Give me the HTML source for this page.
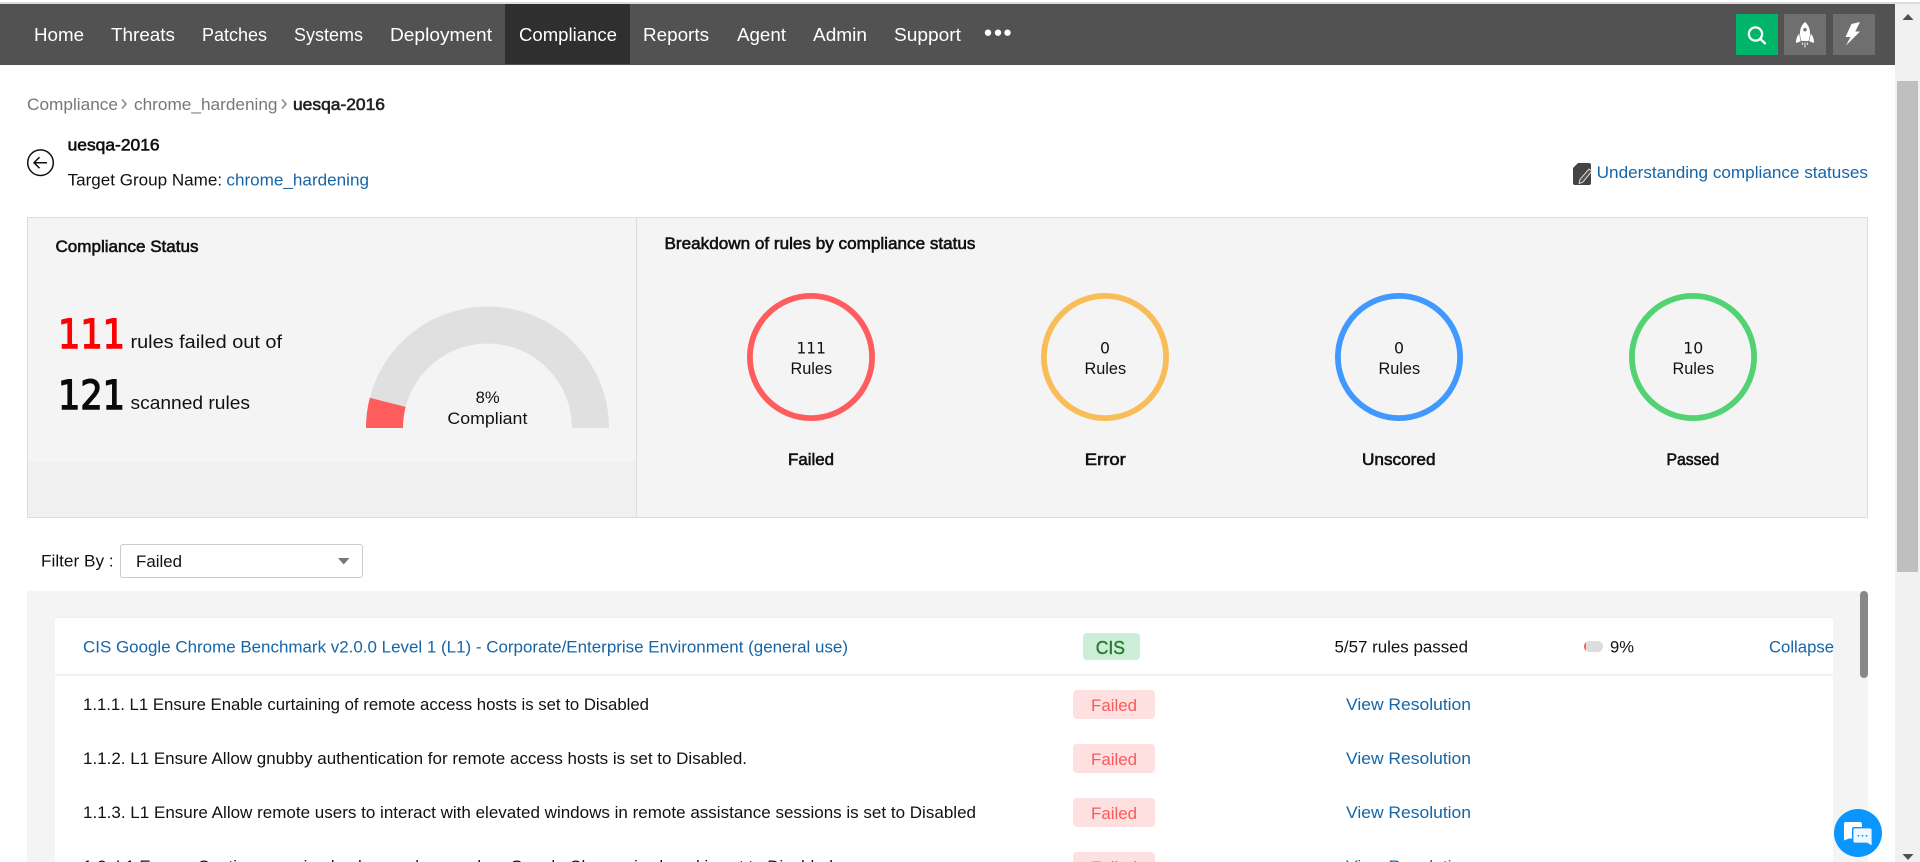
<!DOCTYPE html>
<html lang="en">
<head>
<meta charset="utf-8">
<title>uesqa-2016 - Compliance</title>
<style>
html,body{margin:0;padding:0;width:1920px;height:862px;overflow:hidden;background:#fff}
#page{position:relative;width:1920px;height:862px;overflow:hidden;background:#fff}
.b{position:absolute;box-sizing:border-box}
svg.o{position:absolute;left:0;top:0;width:1920px;height:862px}
text{font-family:"Liberation Sans",Arial,sans-serif;font-size:17px;fill:#111}
.nav{font-size:18px;fill:#fff}
.lnk{fill:#1565a8}
.crumb{fill:#777}
.bd{stroke:#111;stroke-width:.6}
.big{font-family:"DejaVu Sans",sans-serif;font-size:40px;stroke-width:1.4}
.num{font-family:"DejaVu Sans",sans-serif;font-size:16px}
.lg{font-size:18px}
.fl{fill:#f95a5a}
</style>
</head>
<body>
<div id="page">
<div class="b" style="left:0;top:2px;width:1920px;height:2px;background:#ddd"></div>
<div class="b" style="left:0;top:4px;width:1895px;height:61px;background:#525252"></div>
<div class="b" style="left:505px;top:4px;width:125px;height:60px;background:#2f2f2f"></div>
<div class="b" style="left:1736px;top:14px;width:42px;height:41px;background:#00b56a"></div>
<div class="b" style="left:1784px;top:14px;width:42px;height:41px;background:#6f6f6f"></div>
<div class="b" style="left:1833px;top:14px;width:42px;height:41px;background:#6f6f6f"></div>

<div class="b" style="left:1895px;top:4px;width:25px;height:858px;background:#f1f1f1"></div>
<div class="b" style="left:1897px;top:81px;width:21px;height:491px;background:#bfbfbf"></div>

<div class="b" style="left:27px;top:217px;width:1841px;height:301px;background:#f4f4f4;border:1px solid #ddd"></div>
<div class="b" style="left:28px;top:462px;width:608px;height:55px;background:#f0f0f0"></div>
<div class="b" style="left:636px;top:218px;width:1px;height:299px;background:#ddd"></div>

<div class="b" style="left:120px;top:544px;width:243px;height:34px;background:#fff;border:1px solid #ccc;border-radius:3px"></div>

<div class="b" style="left:27px;top:591px;width:1841px;height:271px;background:#f4f4f4"></div>
<div class="b" style="left:55px;top:618px;width:1778px;height:244px;background:#fff;box-shadow:0 -1px 0 #eee"></div>
<div class="b" style="left:55px;top:674px;width:1778px;height:2px;background:#f2f2f2"></div>
<div class="b" style="left:1860px;top:591px;width:8px;height:87px;background:#888;border-radius:4px"></div>

<div class="b" style="left:1083px;top:633px;width:57px;height:27px;background:#cdeed6;border-radius:4px"></div>
<div class="b" style="left:1584px;top:641px;width:19px;height:11px;background:#ddd;border-radius:6px;overflow:hidden"><div style="width:2px;height:11px;background:#ff5d5d"></div></div>

<div class="b" style="left:1073px;top:690px;width:82px;height:29px;background:#ffe0e0;border-radius:4px"></div>
<div class="b" style="left:1073px;top:744px;width:82px;height:29px;background:#ffe0e0;border-radius:4px"></div>
<div class="b" style="left:1073px;top:798px;width:82px;height:29px;background:#ffe0e0;border-radius:4px"></div>
<div class="b" style="left:1073px;top:852px;width:82px;height:10px;background:#ffe0e0;border-radius:4px 4px 0 0"></div>

<svg class="o" viewBox="0 0 1920 862" xmlns="http://www.w3.org/2000/svg">
<!-- nav -->
<text class="nav" x="34" y="41" textLength="50" lengthAdjust="spacingAndGlyphs">Home</text>
<text class="nav" x="111" y="41" textLength="64" lengthAdjust="spacingAndGlyphs">Threats</text>
<text class="nav" x="202" y="41" textLength="65" lengthAdjust="spacingAndGlyphs">Patches</text>
<text class="nav" x="294" y="41" textLength="69" lengthAdjust="spacingAndGlyphs">Systems</text>
<text class="nav" x="390" y="41" textLength="102" lengthAdjust="spacingAndGlyphs">Deployment</text>
<text class="nav" x="519" y="41" textLength="98" lengthAdjust="spacingAndGlyphs">Compliance</text>
<text class="nav" x="643" y="41" textLength="66" lengthAdjust="spacingAndGlyphs">Reports</text>
<text class="nav" x="737" y="41" textLength="49" lengthAdjust="spacingAndGlyphs">Agent</text>
<text class="nav" x="813" y="41" textLength="54" lengthAdjust="spacingAndGlyphs">Admin</text>
<text class="nav" x="894" y="41" textLength="67" lengthAdjust="spacingAndGlyphs">Support</text>
<circle cx="988" cy="32.7" r="3.2" fill="#fff"/><circle cx="998" cy="32.7" r="3.2" fill="#fff"/><circle cx="1007.5" cy="32.7" r="3.2" fill="#fff"/>

<!-- search -->
<circle cx="1755.5" cy="34" r="6.6" fill="none" stroke="#fff" stroke-width="2.3"/>
<path d="M1760.2 38.8L1765.7 44" stroke="#fff" stroke-width="2.4" fill="none"/>
<!-- rocket -->
<path fill="#fff" fill-rule="evenodd" d="M1805 22C1801.5 25 1800 29 1800 33C1800 36 1800.5 39 1801.5 41H1808.5C1809.5 39 1810 36 1810 33C1810 29 1808.5 25 1805 22ZM1805 28A1.7 1.7 0 1 1 1805 31.4A1.7 1.7 0 1 1 1805 28Z"/>
<path fill="#fff" d="M1799.3 33.5C1797 36 1796 39 1796 43L1800.8 41.2C1800 38.8 1799.5 36 1799.3 33.5ZM1810.7 33.5C1813 36 1814 39 1814 43L1809.2 41.2C1810 38.8 1810.5 36 1810.7 33.5Z"/>
<path stroke="#ddd" stroke-width="1.2" d="M1802.5 42.5V45M1805 42.5V47.5M1807.5 42.5V45"/>
<!-- bolt -->
<path fill="#fff" d="M1851.5 24L1860 22L1855.3 31.5H1860L1846 45.5L1850.5 37H1845.5Z"/>
<!-- scroll arrows -->
<path fill="#505050" d="M1908 14L1913.5 20H1902.5Z"/>
<path fill="#505050" d="M1908 860L1902.5 854H1913.5Z"/>

<!-- breadcrumb -->
<text class="crumb" x="27" y="110" textLength="91" lengthAdjust="spacingAndGlyphs">Compliance</text>
<path d="M122 99.5L126 104L122 108.5" fill="none" stroke="#888" stroke-width="1.5"/>
<text class="crumb" x="134" y="110" textLength="143.5" lengthAdjust="spacingAndGlyphs">chrome_hardening</text>
<path d="M282 99.5L286 104L282 108.5" fill="none" stroke="#888" stroke-width="1.5"/>
<text class="bd" x="293" y="110" textLength="92" lengthAdjust="spacingAndGlyphs" style="fill:#222;stroke:#222">uesqa-2016</text>

<!-- back -->
<circle cx="40.5" cy="162.7" r="12.8" fill="none" stroke="#111" stroke-width="1.5"/>
<path d="M47 162.7H34M39.5 157.2L34 162.7L39.5 168.2" fill="none" stroke="#111" stroke-width="1.5"/>
<text class="bd" x="67.6" y="150.7" textLength="92" lengthAdjust="spacingAndGlyphs">uesqa-2016</text>
<text x="67.6" y="185.7" textLength="154.5" lengthAdjust="spacingAndGlyphs" style="font-size:16.5px">Target Group Name:</text>
<text class="lnk" x="226.4" y="185.7" textLength="142.6" lengthAdjust="spacingAndGlyphs" style="font-size:16.5px">chrome_hardening</text>

<!-- doc icon -->
<path fill="#444" d="M1578 163H1589Q1591 163 1591 165V183Q1591 185 1589 185H1575Q1573 185 1573 183V168Z"/>
<path d="M1589 169L1591.8 171.2L1583 182L1579.2 183.6L1579.8 179.6Z" fill="#555" stroke="#ddd" stroke-width="1"/>
<text class="lnk" x="1596.7" y="178" textLength="271.3" lengthAdjust="spacingAndGlyphs">Understanding compliance statuses</text>

<!-- left panel -->
<text class="bd" x="55.5" y="252" textLength="143" lengthAdjust="spacingAndGlyphs">Compliance Status</text>
<text class="big" x="58" y="348" textLength="67" lengthAdjust="spacingAndGlyphs" style="fill:#f00;stroke:#f00">111</text>
<text class="lg" x="130.5" y="348" textLength="151.5" lengthAdjust="spacingAndGlyphs">rules failed out of</text>
<text class="big" x="58" y="409" textLength="67" lengthAdjust="spacingAndGlyphs" style="fill:#0a0a0a;stroke:#0a0a0a">121</text>
<text class="lg" x="130.5" y="409" textLength="119.5" lengthAdjust="spacingAndGlyphs">scanned rules</text>

<!-- gauge -->
<path fill="#e0e0e0" d="M366 428A121.5 121.5 0 0 1 609 428H572A84.5 84.5 0 0 0 403 428Z"/>
<path fill="#ff5d5d" d="M366 428A121.5 121.5 0 0 1 369.8 397.8L405.6 406.9A84.5 84.5 0 0 0 403 428Z"/>
<text x="475.6" y="403" textLength="24" lengthAdjust="spacingAndGlyphs">8%</text>
<text x="447.4" y="424" textLength="80" lengthAdjust="spacingAndGlyphs">Compliant</text>

<!-- right panel -->
<text class="bd" x="664.5" y="249" textLength="311" lengthAdjust="spacingAndGlyphs">Breakdown of rules by compliance status</text>
<g fill="none" stroke-width="5.8">
<circle cx="811" cy="357" r="61.1" stroke="#ff5d5d"/>
<circle cx="1105" cy="357" r="61.1" stroke="#f8bd59"/>
<circle cx="1399" cy="357" r="61.1" stroke="#4099ff"/>
<circle cx="1693" cy="357" r="61.1" stroke="#52d273"/>
</g>
<text class="num" x="796.5" y="353.3" textLength="29.4" lengthAdjust="spacingAndGlyphs">111</text>
<text x="790.5" y="374" textLength="41.6" lengthAdjust="spacingAndGlyphs">Rules</text>
<text class="num" x="1100" y="353.3" textLength="10" lengthAdjust="spacingAndGlyphs">0</text>
<text x="1084.5" y="374" textLength="41.6" lengthAdjust="spacingAndGlyphs">Rules</text>
<text class="num" x="1394" y="353.3" textLength="10" lengthAdjust="spacingAndGlyphs">0</text>
<text x="1378.5" y="374" textLength="41.6" lengthAdjust="spacingAndGlyphs">Rules</text>
<text class="num" x="1683.3" y="353.3" textLength="20" lengthAdjust="spacingAndGlyphs">10</text>
<text x="1672.5" y="374" textLength="41.6" lengthAdjust="spacingAndGlyphs">Rules</text>
<text class="bd" x="788" y="465" textLength="46" lengthAdjust="spacingAndGlyphs">Failed</text>
<text class="bd" x="1084.8" y="465" textLength="41" lengthAdjust="spacingAndGlyphs">Error</text>
<text class="bd" x="1362" y="465" textLength="73.5" lengthAdjust="spacingAndGlyphs">Unscored</text>
<text class="bd" x="1666.5" y="465" textLength="52.6" lengthAdjust="spacingAndGlyphs">Passed</text>

<!-- filter -->
<text x="41" y="566.7" textLength="72.6" lengthAdjust="spacingAndGlyphs">Filter By :</text>
<text x="136" y="567" textLength="46" lengthAdjust="spacingAndGlyphs">Failed</text>
<path fill="#777" d="M338 558H349.5L343.7 564.5Z"/>

<!-- header row -->
<text class="lnk" x="83" y="652.7" textLength="765" lengthAdjust="spacingAndGlyphs">CIS Google Chrome Benchmark v2.0.0 Level 1 (L1) - Corporate/Enterprise Environment (general use)</text>
<text x="1095.7" y="654" textLength="29.3" lengthAdjust="spacingAndGlyphs" style="fill:#2a7a2f;stroke:#2a7a2f;stroke-width:.4;font-size:18px">CIS</text>
<text x="1334.5" y="652.7" textLength="133.5" lengthAdjust="spacingAndGlyphs">5/57 rules passed</text>
<text x="1610" y="652.7" textLength="24" lengthAdjust="spacingAndGlyphs">9%</text>
<text class="lnk" x="1769" y="652.7" textLength="65" lengthAdjust="spacingAndGlyphs">Collapse</text>

<!-- rows -->
<text x="83" y="710" textLength="566" lengthAdjust="spacingAndGlyphs">1.1.1. L1 Ensure Enable curtaining of remote access hosts is set to Disabled</text>
<text x="83" y="764" textLength="664" lengthAdjust="spacingAndGlyphs">1.1.2. L1 Ensure Allow gnubby authentication for remote access hosts is set to Disabled.</text>
<text x="83" y="818" textLength="893" lengthAdjust="spacingAndGlyphs">1.1.3. L1 Ensure Allow remote users to interact with elevated windows in remote assistance sessions is set to Disabled</text>
<text x="83" y="872" textLength="750" lengthAdjust="spacingAndGlyphs">1.2. L1 Ensure Continue running background apps when Google Chrome is closed is set to Disabled</text>

<text class="fl" x="1091" y="711" textLength="46" lengthAdjust="spacingAndGlyphs">Failed</text>
<text class="fl" x="1091" y="765" textLength="46" lengthAdjust="spacingAndGlyphs">Failed</text>
<text class="fl" x="1091" y="819" textLength="46" lengthAdjust="spacingAndGlyphs">Failed</text>
<text class="fl" x="1091" y="873" textLength="46" lengthAdjust="spacingAndGlyphs">Failed</text>
<text class="lnk" x="1346" y="710" textLength="125" lengthAdjust="spacingAndGlyphs">View Resolution</text>
<text class="lnk" x="1346" y="764" textLength="125" lengthAdjust="spacingAndGlyphs">View Resolution</text>
<text class="lnk" x="1346" y="818" textLength="125" lengthAdjust="spacingAndGlyphs">View Resolution</text>
<text class="lnk" x="1346" y="872" textLength="125" lengthAdjust="spacingAndGlyphs">View Resolution</text>

<!-- chat -->
<circle cx="1858" cy="833" r="24" fill="#0a95ff"/>
<path fill="#fff" d="M1846 822H1860Q1862 822 1862 824V827H1854Q1852 827 1852 829V838.5H1849L1844 840.5V824Q1844 822 1846 822Z"/>
<path fill="#f0f8ff" stroke="#0a95ff" stroke-width=".8" d="M1855 828H1870Q1872 828 1872 830V846L1867 843H1855Q1853 843 1853 841V830Q1853 828 1855 828Z"/>
<circle cx="1858.5" cy="835.8" r=".9" fill="#0a95ff"/><circle cx="1862.5" cy="835.8" r=".9" fill="#0a95ff"/><circle cx="1866.5" cy="835.8" r=".9" fill="#0a95ff"/>
</svg>
</div>
</body>
</html>
